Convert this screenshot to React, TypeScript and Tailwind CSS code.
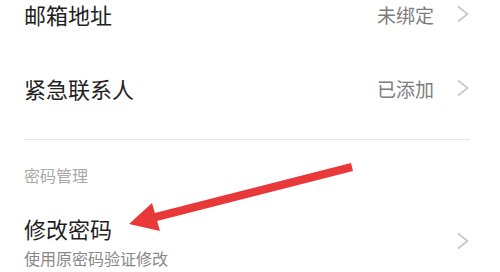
import React from 'react';

function Chevron() {
    return (
        <svg width="14" height="18" viewBox="0 0 14 18" className="shrink-0">
            <path d="M2 1.5 L11.5 9 L2 16.5" fill="none" stroke="#c6c6c6" strokeWidth="1.6" strokeLinejoin="miter" />
        </svg>
    );
}

export default function App() {
    return (
        <div
            className="relative w-[500px] h-[272px] overflow-hidden bg-white"
            style={{ fontFamily: '"Noto Sans CJK SC", "Noto Sans", sans-serif' }}
        >
            <div className="pl-[24px] pr-[30px]">
                {/* 邮箱地址 */}
                <div className="h-[28px] flex items-center justify-between">
                    <span className="text-[22px] leading-none text-[#222]">邮箱地址</span>
                    <div className="flex items-center gap-[22px]">
                        <span className="text-[19px] leading-none text-[#7d7d7d]">未绑定</span>
                        <Chevron />
                    </div>
                </div>

                {/* 紧急联系人 */}
                <div className="mt-[46px] h-[28px] flex items-center justify-between">
                    <span className="text-[22px] leading-none text-[#222]">紧急联系人</span>
                    <div className="flex items-center gap-[22px]">
                        <span className="text-[19px] leading-none text-[#7d7d7d]">已添加</span>
                        <Chevron />
                    </div>
                </div>

                <div className="mt-[37px] h-px bg-[#e6e6e6]" />

                {/* 密码管理 */}
                <div className="mt-[25px] h-[20px] flex items-center">
                    <span className="text-[16px] leading-none text-[#a8a8a8]">密码管理</span>
                </div>

                {/* 修改密码 */}
                <div className="mt-[29px] flex items-center justify-between">
                    <div className="flex flex-col">
                        <div className="h-[28px] flex items-center">
                            <span className="text-[22px] leading-none text-[#1f1f1f]">修改密码</span>
                        </div>
                        <div className="mt-[6px] h-[20px] flex items-center">
                            <span className="text-[16px] leading-none text-[#888]">使用原密码验证修改</span>
                        </div>
                    </div>
                    <Chevron />
                </div>
            </div>

            {/* annotation arrow */}
            <svg className="absolute left-0 top-0 pointer-events-none" width="500" height="272" viewBox="0 0 500 272">
                <line x1="352" y1="167" x2="150" y2="218.5" stroke="#e8383a" strokeWidth="8" />
                <polygon points="129,224 152,203 160,231" fill="#e8383a" />
            </svg>
        </div>
    );
}
